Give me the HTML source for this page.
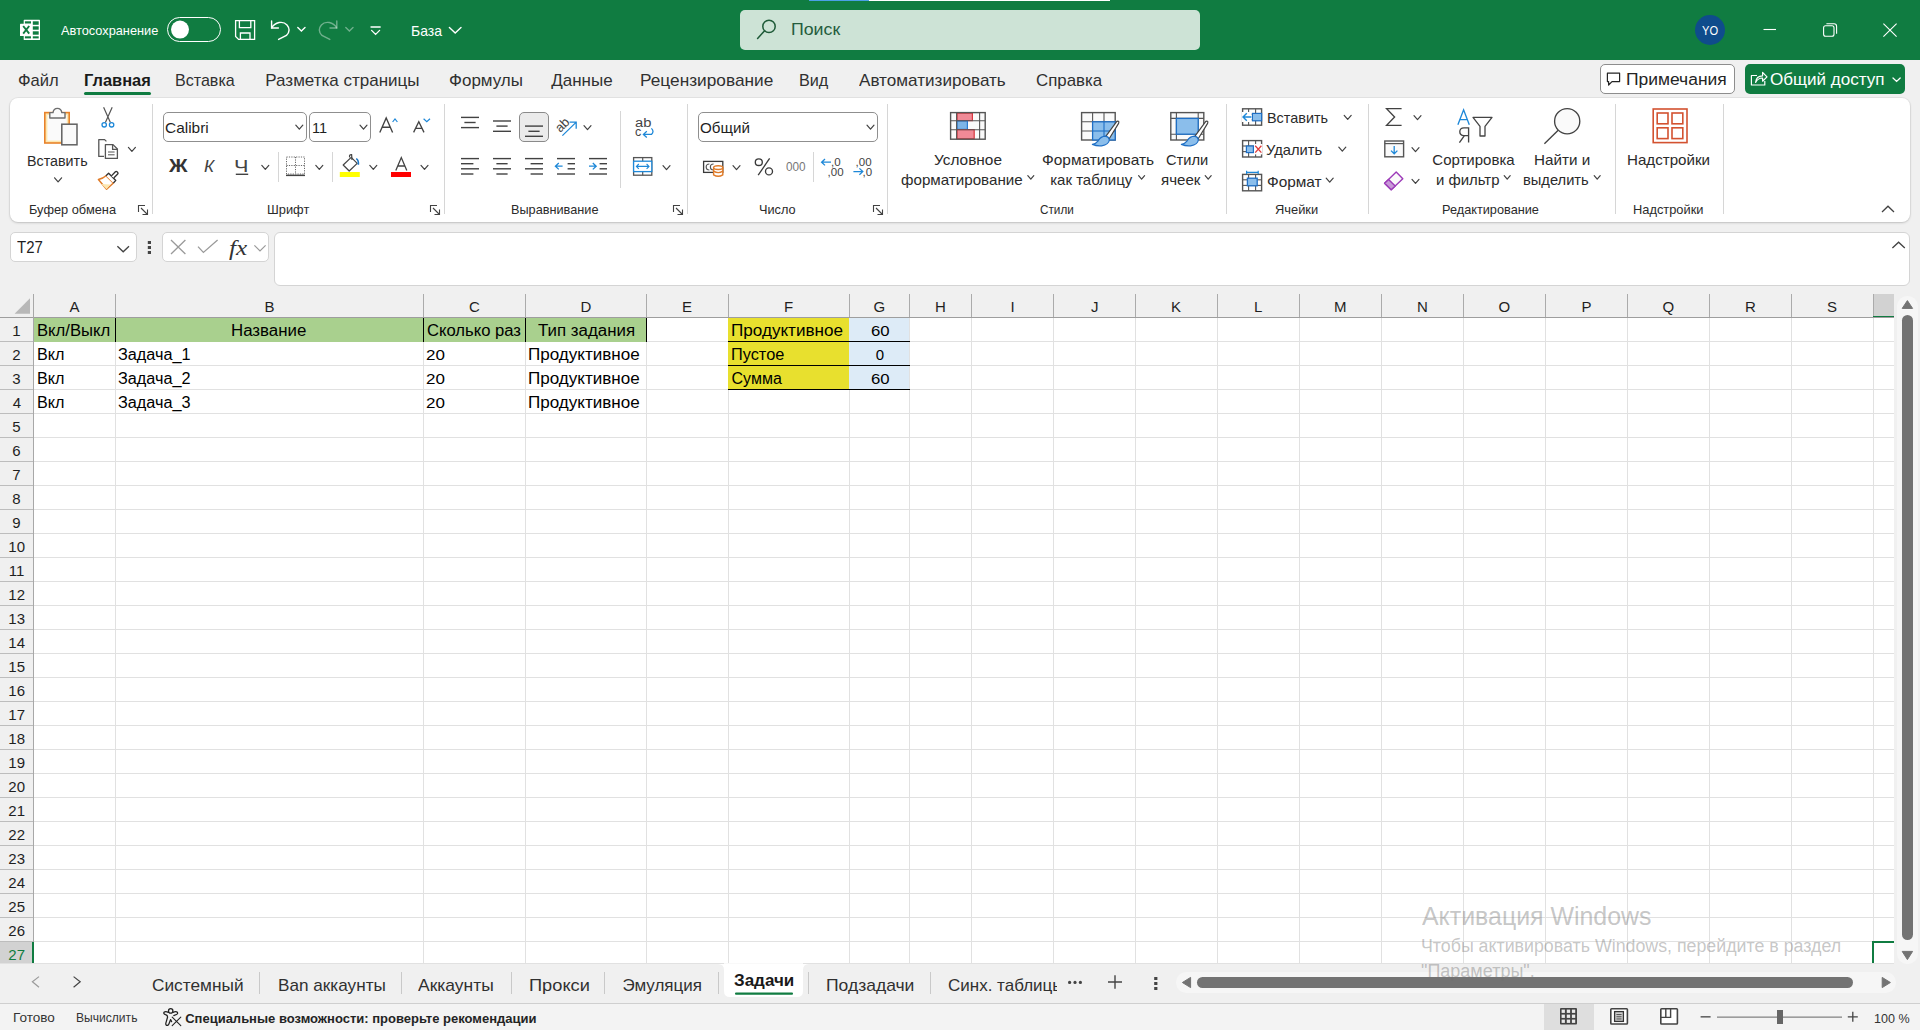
<!DOCTYPE html>
<html><head><meta charset="utf-8"><style>
*{box-sizing:border-box;}
html,body{margin:0;padding:0;}
body{width:1920px;height:1030px;overflow:hidden;position:relative;background:#f0f0f0;font-family:"Liberation Sans",sans-serif;color:#000;}
.t{position:absolute;line-height:0;white-space:pre;transform-origin:0 0;}
svg{position:absolute;left:0;top:0;}
</style></head><body>
<div style='position:absolute;left:0px;top:0px;width:1920px;height:60px;background:#107C41'></div><div style='position:absolute;left:809px;top:0px;width:60px;height:1px;background:#4aa0e6'></div><div style='position:absolute;left:869px;top:0px;width:241px;height:1px;background:#ffffff'></div><div style='position:absolute;left:740px;top:10px;width:460px;height:40px;background:#CDE3D6;border-radius:5px'></div><div style='position:absolute;left:84px;top:92px;width:67px;height:3px;background:#107C41;border-radius:2px'></div><div style='position:absolute;left:1600px;top:64px;width:135px;height:30px;background:#fff;border:1px solid #8d8d8d;border-radius:5px'></div><div style='position:absolute;left:1745px;top:64px;width:160px;height:30px;background:#107C41;border-radius:5px'></div><div style='position:absolute;left:10px;top:98px;width:1900px;height:124px;background:#fff;border-radius:8px;box-shadow:0 0 0 1px rgba(0,0,0,0.045),0 1px 2.5px rgba(0,0,0,0.16)'></div><div style='position:absolute;left:163px;top:112px;width:144px;height:30px;background:#fff;border:1px solid #8f8f8f;border-radius:5px'></div><div style='position:absolute;left:309px;top:112px;width:62px;height:30px;background:#fff;border:1px solid #8f8f8f;border-radius:5px'></div><div style='position:absolute;left:519px;top:112px;width:30px;height:30px;background:#ebebeb;border:1px solid #8a8a8a;border-radius:5px'></div><div style='position:absolute;left:698px;top:112px;width:180px;height:30px;background:#fff;border:1px solid #8f8f8f;border-radius:5px'></div><div style='position:absolute;left:10px;top:232px;width:127px;height:30px;background:#fff;border:1px solid #d4d4d4;border-radius:5px'></div><div style='position:absolute;left:162px;top:232px;width:107px;height:30px;background:#fff;border:1px solid #d4d4d4;border-radius:5px'></div><div style='position:absolute;left:274px;top:232px;width:1636px;height:54px;background:#fff;border:1px solid #d4d4d4;border-radius:6px'></div><div style='position:absolute;left:1897px;top:296px;width:21px;height:668px;background:#f6f6f6;border-radius:10px'></div><div style='position:absolute;left:1902px;top:315px;width:11px;height:625px;background:#737373;border-radius:5.5px'></div><div style='position:absolute;left:1176px;top:972px;width:720px;height:21px;background:#f6f6f6;border-radius:10.5px'></div><div style='position:absolute;left:1197px;top:977px;width:656px;height:11px;background:#737373;border-radius:5.5px'></div><div style='position:absolute;left:0px;top:1003px;width:1920px;height:1px;background:#cfcfcf'></div><div style='position:absolute;left:0px;top:1004px;width:1920px;height:26px;background:#f3f3f3'></div><div style='position:absolute;left:1544px;top:1004px;width:50px;height:26px;background:#dedede'></div>
<svg width="1920" height="1030" viewBox="0 0 1920 1030">
<rect x="23.7" y="19.8" width="16.3" height="20.2" rx="0.6" fill="#fff"/><rect x="20" y="23.7" width="11.3" height="12.3" rx="0.5" fill="#fff"/>
<g fill="#107C41"><rect x="24.9" y="21.3" width="6.1" height="2.2"/><rect x="24.9" y="36.3" width="6.1" height="2.1"/>
<rect x="32.8" y="21.3" width="5.9" height="3.5"/><rect x="32.8" y="26.3" width="5.9" height="3.4"/><rect x="32.8" y="31.3" width="5.9" height="3.4"/><rect x="32.8" y="36.3" width="5.9" height="2.1"/></g>
<path d="M23.2 26 L29.2 33.6 M29.2 26 L23.2 33.6" stroke="#107C41" stroke-width="1.9"/><rect x="167.5" y="17.5" width="53" height="24" rx="12" ry="12" fill="none" stroke="#fff" stroke-width="1"/>
<circle cx="180" cy="29.6" r="9" fill="#fff"/><g fill="none" stroke="#fff" stroke-width="1.3">
<path d="M235.6 20.6 H254.6 V39.4 H238.6 L235.6 36.4 Z"/>
<path d="M239.4 20.6 V27.6 H250.8 V20.6"/>
<path d="M240.4 39.4 V33 H250 V39.4"/></g><g fill="none" stroke="#fff" stroke-width="1.4" stroke-linecap="round">
<path d="M271.6 21 V28 H278.4"/>
<path d="M271.8 27.8 C275 22 283 20.5 287 25 C290 28.5 289.4 32.5 286.4 35.5 L278.6 39.4"/>
<path d="M297.8 27.6 L301.4 31 L305 27.6"/></g><g fill="none" stroke="#fff" stroke-opacity="0.4" stroke-width="1.4" stroke-linecap="round">
<path d="M336.8 21 V28 H330"/>
<path d="M336.6 27.8 C333.4 22 325.4 20.5 321.4 25 C318.4 28.5 319 32.5 322 35.5 L329.8 39.4"/>
<path d="M345.8 27.6 L349.4 31 L353 27.6"/></g><g fill="none" stroke="#fff" stroke-width="1.3" stroke-linecap="round">
<line x1="371" y1="27" x2="380.2" y2="27"/>
<path d="M371.6 30.4 L375.6 34.4 L379.6 30.4"/></g><path d="M449.4 27.4 L455.2 33 L461 27.4" fill="none" stroke="#fff" stroke-width="1.4" stroke-linecap="round"/><g fill="none" stroke="#1e5a38" stroke-width="1.5">
<circle cx="769" cy="26.4" r="6.2"/><line x1="764.6" y1="30.8" x2="757.6" y2="38.4" stroke-linecap="round"/></g><circle cx="1710" cy="30" r="15" fill="#0f4c8c"/><g stroke="#fff" stroke-width="1.1" fill="none">
<line x1="1763.5" y1="29.5" x2="1776" y2="29.5"/>
<rect x="1823.6" y="25.8" width="10.4" height="10.4" rx="2"/>
<path d="M1826.4 23.8 H1834 Q1836.6 23.8 1836.6 26.4 V33.8"/>
<path d="M1883.4 23.6 L1896.6 36.6 M1896.6 23.6 L1883.4 36.6"/></g><path d="M1607.4 73.2 H1619.6 V81.6 H1612 L1608.6 85 V81.6 H1607.4 Z" fill="none" stroke="#242424" stroke-width="1.2" stroke-linejoin="round"/><g fill="none" stroke="#fff" stroke-width="1.2" stroke-linejoin="round">
<path d="M1757 75.5 H1751.4 V85 H1764.8 V81"/>
<path d="M1755.6 82.4 C1756 77.6 1759 75.8 1762.6 75.8 V72.4 L1767 76.9 L1762.6 81.2 V78 C1759.6 78 1757.2 79.4 1755.6 82.4 Z"/></g>
<path d="M1893 78 L1896.6 81.4 L1900.2 78" fill="none" stroke="#fff" stroke-width="1.3" stroke-linecap="round"/><rect x="152" y="104" width="1" height="110" fill="#d6d6d6"/><rect x="444" y="104" width="1" height="110" fill="#d6d6d6"/><rect x="687" y="104" width="1" height="110" fill="#d6d6d6"/><rect x="887" y="104" width="1" height="110" fill="#d6d6d6"/><rect x="1226" y="104" width="1" height="110" fill="#d6d6d6"/><rect x="1368" y="104" width="1" height="110" fill="#d6d6d6"/><rect x="1615" y="104" width="1" height="110" fill="#d6d6d6"/><rect x="1723" y="104" width="1" height="110" fill="#d6d6d6"/><g fill="none" stroke="#424242" stroke-width="1.1"><path d="M138.5 212 V205.5 H145"/><path d="M141 208 L147.5 214.5 M142.5 214.5 H147.5 V209.5"/></g><g fill="none" stroke="#424242" stroke-width="1.1"><path d="M430.5 212 V205.5 H437"/><path d="M433 208 L439.5 214.5 M434.5 214.5 H439.5 V209.5"/></g><g fill="none" stroke="#424242" stroke-width="1.1"><path d="M673.5 212 V205.5 H680"/><path d="M676 208 L682.5 214.5 M677.5 214.5 H682.5 V209.5"/></g><g fill="none" stroke="#424242" stroke-width="1.1"><path d="M873.5 212 V205.5 H880"/><path d="M876 208 L882.5 214.5 M877.5 214.5 H882.5 V209.5"/></g><path d="M1882 212 L1888 206.2 L1894 212" fill="none" stroke="#424242" stroke-width="1.3"/><rect x="44.8" y="112.6" width="24.4" height="30.4" fill="#fde7b0" stroke="#e8822a" stroke-width="1.6"/>
<rect x="47.4" y="115" width="19.4" height="25.6" fill="#fafafa"/>
<path d="M49.8 112.6 H53 Q53.6 108.4 57.4 108.4 Q61.2 108.4 61.8 112.6 H65 V118 H49.8 Z" fill="#fafafa" stroke="#6e6e6e" stroke-width="1.4" stroke-linejoin="round"/>
<rect x="61.8" y="124.2" width="15.2" height="20.6" fill="#fafafa" stroke="#616161" stroke-width="1.5"/><path d="M54.6 177.8 L58.1 181.8 L61.6 177.8" fill="none" stroke="#424242" stroke-width="1.2" stroke-linecap="round" stroke-linejoin="round"/><g fill="none" stroke-width="1.2"><path d="M103.6 107.2 L110.4 122.6 M112.2 107.2 L105.4 122.6" stroke="#555"/>
<circle cx="104.2" cy="124.8" r="2.2" stroke="#1e88d8" stroke-width="1.3"/><circle cx="111.6" cy="124.8" r="2.2" stroke="#1e88d8" stroke-width="1.3"/></g><g fill="none" stroke="#555" stroke-width="1.3" stroke-linejoin="round">
<path d="M104 156.4 H98.8 V139.6 H104.6 L106.4 141.4"/>
<path d="M105.4 144.6 H113 L117.4 149 V158.4 H105.4 Z"/>
<path d="M112.6 144.6 V149.4 H117.4"/>
<line x1="108" y1="152" x2="114.6" y2="152" stroke-width="1"/><line x1="108" y1="154.8" x2="114.6" y2="154.8" stroke-width="1"/></g><path d="M128.4 147.4 L131.9 151.4 L135.4 147.4" fill="none" stroke="#424242" stroke-width="1.2" stroke-linecap="round" stroke-linejoin="round"/><path d="M98.4 179.6 Q103 178.6 106 175.8 L113.4 183 L106.6 189.2 Z" fill="#fff" stroke="#e07b28" stroke-width="1.5" stroke-linejoin="round"/>
<path d="M101.4 184 L110.2 184.4 L106.6 189.2 Z" fill="#fde7b0"/>
<path d="M106 175.8 L108.6 173.3 L115.8 180.4 L113.4 183" fill="#fff" stroke="#333" stroke-width="1.35" stroke-linejoin="round"/>
<path d="M111.4 175.9 L115.4 171.8 Q116.2 171 117 171.8 L117.7 172.5 Q118.4 173.3 117.7 174 L113.7 178" fill="#fff" stroke="#333" stroke-width="1.35" stroke-linejoin="round"/><path d="M295.8 125.2 L299.3 129.2 L302.8 125.2" fill="none" stroke="#424242" stroke-width="1.2" stroke-linecap="round" stroke-linejoin="round"/><path d="M360 125.2 L363.5 129.2 L367 125.2" fill="none" stroke="#424242" stroke-width="1.2" stroke-linecap="round" stroke-linejoin="round"/><path d="M379.8 132.4 L386.2 118 L392.6 132.4 M382.2 127.2 H390.2" fill="none" stroke="#424242" stroke-width="1.35"/>
<path d="M392.6 122 L395 119 L397.4 122" fill="none" stroke="#1e88d8" stroke-width="1.2"/>
<path d="M413.6 132.4 L418.8 121.8 L424 132.4 M415.6 128.4 H422" fill="none" stroke="#424242" stroke-width="1.3"/>
<path d="M423.6 118.8 L426.8 121.8 L430 118.8" fill="none" stroke="#1e88d8" stroke-width="1.2"/><rect x="235.8" y="173.6" width="12.4" height="1.4" fill="#424242"/><path d="M261.8 165.4 L265.3 169.4 L268.8 165.4" fill="none" stroke="#424242" stroke-width="1.2" stroke-linecap="round" stroke-linejoin="round"/><rect x="278" y="152" width="1" height="30" fill="#d6d6d6"/><rect x="332" y="152" width="1" height="30" fill="#d6d6d6"/><g fill="none" stroke="#6a6a6a" stroke-width="1" stroke-dasharray="1.2 1.2">
<rect x="286.5" y="157" width="18" height="17"/><line x1="295.5" y1="157" x2="295.5" y2="174"/><line x1="286.5" y1="165.5" x2="304.5" y2="165.5"/></g>
<rect x="286" y="174.6" width="19" height="1.5" fill="#424242"/><path d="M315.8 165.4 L319.3 169.4 L322.8 165.4" fill="none" stroke="#424242" stroke-width="1.2" stroke-linecap="round" stroke-linejoin="round"/><path d="M343.2 165 L351.2 157.4 L357.2 163.4 L349.2 171 Z" fill="#fff" stroke="#444" stroke-width="1.25" stroke-linejoin="round"/>
<path d="M349.6 157.4 Q349 154.4 351.6 154.6 L352 160" fill="none" stroke="#444" stroke-width="1.2"/>
<path d="M356.2 158.6 Q358.8 160 358.4 164.8" fill="none" stroke="#1e78c8" stroke-width="1.6"/>
<rect x="339.8" y="172" width="20" height="5" fill="#ffff00"/><path d="M369.8 165.4 L373.3 169.4 L376.8 165.4" fill="none" stroke="#424242" stroke-width="1.2" stroke-linecap="round" stroke-linejoin="round"/><path d="M395.8 170.6 L401.3 157.6 L406.8 170.6 M397.8 166 H404.8" fill="none" stroke="#424242" stroke-width="1.3"/>
<rect x="391" y="172" width="20" height="5" fill="#ff0000"/><path d="M421 165.4 L424.5 169.4 L428 165.4" fill="none" stroke="#424242" stroke-width="1.2" stroke-linecap="round" stroke-linejoin="round"/><rect x="461" y="116.7" width="18" height="1.4" fill="#424242"/><rect x="464.4" y="121.8" width="11.2" height="1.4" fill="#424242"/><rect x="461" y="126.89999999999999" width="18" height="1.4" fill="#424242"/><rect x="493" y="120.3" width="18" height="1.4" fill="#424242"/><rect x="496.4" y="125.39999999999999" width="11.2" height="1.4" fill="#424242"/><rect x="493" y="130.60000000000002" width="18" height="1.4" fill="#424242"/><rect x="525" y="125.39999999999999" width="18" height="1.4" fill="#424242"/><rect x="528.4" y="130.60000000000002" width="11.2" height="1.4" fill="#424242"/><rect x="525" y="135.60000000000002" width="18" height="1.4" fill="#424242"/><g transform="translate(562.4 124.6) rotate(-45)"><text x="-7.6" y="4.4" font-family="Liberation Sans" font-size="13" fill="#444">ab</text></g>
<path d="M562.4 135.6 L576 122.4 M569.6 122.2 H576.2 V128.8" fill="none" stroke="#1e88d8" stroke-width="1.3"/><path d="M584 125.6 L587.5 129.6 L591 125.6" fill="none" stroke="#424242" stroke-width="1.2" stroke-linecap="round" stroke-linejoin="round"/><rect x="461" y="157.9" width="18" height="1.4" fill="#424242"/><rect x="461" y="163.0" width="12.4" height="1.4" fill="#424242"/><rect x="461" y="168.10000000000002" width="18" height="1.4" fill="#424242"/><rect x="461" y="173.3" width="12.4" height="1.4" fill="#424242"/><rect x="493" y="157.9" width="18" height="1.4" fill="#424242"/><rect x="496.4" y="163.0" width="11.2" height="1.4" fill="#424242"/><rect x="493" y="168.10000000000002" width="18" height="1.4" fill="#424242"/><rect x="496.4" y="173.3" width="11.2" height="1.4" fill="#424242"/><rect x="525" y="157.9" width="18" height="1.4" fill="#424242"/><rect x="530.6" y="163.0" width="12.4" height="1.4" fill="#424242"/><rect x="525" y="168.10000000000002" width="18" height="1.4" fill="#424242"/><rect x="530.6" y="173.3" width="12.4" height="1.4" fill="#424242"/><rect x="557" y="157.9" width="18" height="1.4" fill="#424242"/><rect x="557" y="173.3" width="18" height="1.4" fill="#424242"/><rect x="567.6" y="163.0" width="7.4" height="1.4" fill="#424242"/><rect x="567.6" y="168.10000000000002" width="7.4" height="1.4" fill="#424242"/><path d="M562.6 166.2 H555.6 M558.8 163 L555.4 166.2 L558.8 169.4" fill="none" stroke="#1e88d8" stroke-width="1.3"/><rect x="589" y="157.9" width="18" height="1.4" fill="#424242"/><rect x="589" y="173.3" width="18" height="1.4" fill="#424242"/><rect x="599.6" y="163.0" width="7.4" height="1.4" fill="#424242"/><rect x="599.6" y="168.10000000000002" width="7.4" height="1.4" fill="#424242"/><path d="M589 166.2 H596 M592.8 163 L596.2 166.2 L592.8 169.4" fill="none" stroke="#1e88d8" stroke-width="1.3"/><rect x="620" y="111" width="1" height="77" fill="#d6d6d6"/><text x="635" y="127.2" font-family="Liberation Sans" font-size="12.5" fill="#444" textLength="16.4" lengthAdjust="spacingAndGlyphs">ab</text>
<text x="635" y="136" font-family="Liberation Sans" font-size="12.5" fill="#444">c</text>
<path d="M651.4 128.4 Q654.6 131.6 651.4 134.4 H643.6 M646.8 131.2 L643.4 134.4 L646.8 137.4" fill="none" stroke="#1e88d8" stroke-width="1.3"/><rect x="633.6" y="157.6" width="18.2" height="17.6" fill="#fff" stroke="#555" stroke-width="1.3"/>
<line x1="642.7" y1="157.6" x2="642.7" y2="175.2" stroke="#555" stroke-width="1.2"/>
<rect x="633.6" y="161.2" width="18.2" height="10.4" fill="#fff" stroke="#1e88d8" stroke-width="1.3"/>
<path d="M636.4 166.4 H649 M638.8 164 L636.4 166.4 L638.8 168.8 M646.6 164 L649 166.4 L646.6 168.8" fill="none" stroke="#1e88d8" stroke-width="1.1"/><path d="M663 165.6 L666.5 169.6 L670 165.6" fill="none" stroke="#424242" stroke-width="1.2" stroke-linecap="round" stroke-linejoin="round"/><path d="M867 125.2 L870.5 129.2 L874 125.2" fill="none" stroke="#424242" stroke-width="1.2" stroke-linecap="round" stroke-linejoin="round"/><rect x="703.6" y="161.4" width="19.2" height="11" fill="#fff" stroke="#3a3a3a" stroke-width="1.3"/>
<path d="M709.4 164 Q706.2 164 706.2 167 Q706.2 170 709.4 170 M713.6 164 Q710.4 164 710.4 167 Q710.4 170 713.6 170" fill="none" stroke="#555" stroke-width="1.2"/>
<g fill="#fff" stroke="#e07b28" stroke-width="1.4"><path d="M713.6 167.6 V174.8 Q718.2 177.8 722.8 174.8 V167.6"/><ellipse cx="718.2" cy="167.6" rx="4.6" ry="1.9"/><path d="M713.6 171.2 Q718.2 174 722.8 171.2" fill="none"/></g><path d="M733 165.6 L736.5 169.6 L740 165.6" fill="none" stroke="#424242" stroke-width="1.2" stroke-linecap="round" stroke-linejoin="round"/><g fill="none" stroke="#3a3a3a" stroke-width="1.35"><ellipse cx="758.8" cy="162.2" rx="3.5" ry="3.3"/><ellipse cx="769" cy="171.4" rx="3.5" ry="3.5"/><line x1="769.6" y1="158.4" x2="758.2" y2="175.2"/></g><rect x="813" y="152" width="1" height="30" fill="#d6d6d6"/><text x="831" y="166.4" font-family="Liberation Sans" font-size="11.5" fill="#444">,0</text>
<text x="827.6" y="175.8" font-family="Liberation Sans" font-size="11.5" fill="#444">,00</text>
<path d="M831 162.2 H821.8 M825 159 L821.6 162.2 L825 165.4" fill="none" stroke="#1e88d8" stroke-width="1.3"/>
<text x="855.6" y="166.4" font-family="Liberation Sans" font-size="11.5" fill="#444">,00</text>
<text x="862.6" y="175.8" font-family="Liberation Sans" font-size="11.5" fill="#444">,0</text>
<path d="M853.4 171.6 H862.6 M859.4 168.4 L862.8 171.6 L859.4 174.8" fill="none" stroke="#1e88d8" stroke-width="1.3"/><rect x="950.6" y="112.6" width="34.6" height="26.6" fill="#fafafa"/><rect x="957" y="113.2" width="15.4" height="7.4" fill="#f08a96" stroke="#d9363e" stroke-width="1.2"/><rect x="957" y="121" width="10.4" height="8.4" fill="#7db4e6" stroke="#2a7ad0" stroke-width="1.2"/><rect x="957" y="129.6" width="17.2" height="9.2" fill="#f08a96" stroke="#d9363e" stroke-width="1.2"/><rect x="950.6" y="112.6" width="34.6" height="26.6" fill="none" stroke="#555" stroke-width="1.4"/><line x1="956.6" y1="112.6" x2="956.6" y2="139.2" stroke="#555" stroke-width="1.1"/><line x1="979.6" y1="112.6" x2="979.6" y2="139.2" stroke="#555" stroke-width="1.1"/><line x1="950.6" y1="120.8" x2="985.2" y2="120.8" stroke="#555" stroke-width="1.1"/><line x1="950.6" y1="129.8" x2="985.2" y2="129.8" stroke="#555" stroke-width="1.1"/><path d="M1027.8 175.6 L1030.8 179.2 L1033.8 175.6" fill="none" stroke="#424242" stroke-width="1.2" stroke-linecap="round" stroke-linejoin="round"/><rect x="1081.6" y="112.6" width="33.6" height="27.4" fill="#fafafa"/><rect x="1081.6" y="112.6" width="33.6" height="27.4" fill="none" stroke="#555" stroke-width="1.4"/><line x1="1092.6" y1="112.6" x2="1092.6" y2="140.0" stroke="#555" stroke-width="1.1"/><line x1="1104" y1="112.6" x2="1104" y2="140.0" stroke="#555" stroke-width="1.1"/><line x1="1081.6" y1="121.8" x2="1115.1999999999998" y2="121.8" stroke="#555" stroke-width="1.1"/><line x1="1081.6" y1="131" x2="1115.1999999999998" y2="131" stroke="#555" stroke-width="1.1"/><rect x="1092.6" y="121.8" width="22.6" height="18.2" fill="#8bbeeb" stroke="#1f6fc5" stroke-width="1.3"/><line x1="1104" y1="121.8" x2="1104" y2="140" stroke="#1f6fc5" stroke-width="1.1"/><line x1="1092.6" y1="131" x2="1115.2" y2="131" stroke="#1f6fc5" stroke-width="1.1"/><path d="M1116.8 121.4 Q1119.6 120.4 1118.6 123.4 L1109.2 138.8 L1105.6 136.6 Z" fill="#fff" stroke="#444" stroke-width="1.2" stroke-linejoin="round"/><path d="M1105.4 136.2 Q1108.8 136.6 1109.4 139.8 Q1108.8 144.8 1101.6 145.8 Q1096.6 146.2 1092.4 144.4 Q1096.2 143.4 1098.2 140.8 Q1100.8 136.4 1105.4 136.2 Z" fill="#8bbeeb" stroke="#1f6fc5" stroke-width="1.2" stroke-linejoin="round"/><path d="M1138.6 175.6 L1141.6 179.2 L1144.6 175.6" fill="none" stroke="#424242" stroke-width="1.2" stroke-linecap="round" stroke-linejoin="round"/><rect x="1170.8" y="112.6" width="33" height="27.4" fill="#fafafa"/><rect x="1170.8" y="112.6" width="33" height="27.4" fill="none" stroke="#555" stroke-width="1.4"/><line x1="1176.4" y1="112.6" x2="1176.4" y2="140.0" stroke="#555" stroke-width="1.1"/><line x1="1198.2" y1="112.6" x2="1198.2" y2="140.0" stroke="#555" stroke-width="1.1"/><line x1="1170.8" y1="118.4" x2="1203.8" y2="118.4" stroke="#555" stroke-width="1.1"/><line x1="1170.8" y1="134.2" x2="1203.8" y2="134.2" stroke="#555" stroke-width="1.1"/><rect x="1176.4" y="118.4" width="21.8" height="15.8" fill="#8bbeeb" stroke="#1f6fc5" stroke-width="1.3"/><path d="M1205.8 121.4 Q1208.6 120.4 1207.6 123.4 L1198.2 138.8 L1194.6 136.6 Z" fill="#fff" stroke="#444" stroke-width="1.2" stroke-linejoin="round"/><path d="M1194.4 136.2 Q1197.8 136.6 1198.4 139.8 Q1197.8 144.8 1190.6 145.8 Q1185.6 146.2 1181.4 144.4 Q1185.2 143.4 1187.2 140.8 Q1189.8 136.4 1194.4 136.2 Z" fill="#8bbeeb" stroke="#1f6fc5" stroke-width="1.2" stroke-linejoin="round"/><path d="M1205.2 175.6 L1208.2 179.2 L1211.2 175.6" fill="none" stroke="#424242" stroke-width="1.2" stroke-linecap="round" stroke-linejoin="round"/><rect x="1242.6" y="108.8" width="19" height="16.4" fill="none" stroke="#555" stroke-width="1.4"/><line x1="1248.6" y1="108.8" x2="1248.6" y2="125.19999999999999" stroke="#555" stroke-width="1.1"/><line x1="1255.6" y1="108.8" x2="1255.6" y2="125.19999999999999" stroke="#555" stroke-width="1.1"/><line x1="1242.6" y1="114.2" x2="1261.6" y2="114.2" stroke="#555" stroke-width="1.1"/><line x1="1242.6" y1="119.8" x2="1261.6" y2="119.8" stroke="#555" stroke-width="1.1"/><rect x="1252.4" y="113.4" width="9.2" height="7.4" fill="#8bbeeb" stroke="#1f6fc5" stroke-width="1.2"/><rect x="1242" y="112" width="9.6" height="10" fill="#fff"/><path d="M1251.4 117 H1243.2 M1246.8 113.2 L1243 117 L1246.8 120.8" fill="none" stroke="#1e88d8" stroke-width="1.4"/><path d="M1344.2 115.4 L1347.7 119.4 L1351.2 115.4" fill="none" stroke="#424242" stroke-width="1.2" stroke-linecap="round" stroke-linejoin="round"/><rect x="1242.6" y="140.6" width="19" height="16.4" fill="none" stroke="#555" stroke-width="1.4"/><line x1="1248.6" y1="140.6" x2="1248.6" y2="157.0" stroke="#555" stroke-width="1.1"/><line x1="1255.6" y1="140.6" x2="1255.6" y2="157.0" stroke="#555" stroke-width="1.1"/><line x1="1242.6" y1="146.0" x2="1261.6" y2="146.0" stroke="#555" stroke-width="1.1"/><line x1="1242.6" y1="151.6" x2="1261.6" y2="151.6" stroke="#555" stroke-width="1.1"/><rect x="1246.4" y="146" width="7" height="6.6" fill="#8bbeeb" stroke="#1f6fc5" stroke-width="1.2"/><rect x="1254" y="144" width="8.4" height="10.4" fill="#fff"/><path d="M1255.2 145.8 L1261.4 152.6 M1261.4 145.8 L1255.2 152.6" stroke="#e03c3c" stroke-width="1.3"/><path d="M1338.8 147.2 L1342.3 151.2 L1345.8 147.2" fill="none" stroke="#424242" stroke-width="1.2" stroke-linecap="round" stroke-linejoin="round"/><rect x="1242.6" y="174.4" width="19" height="16.4" fill="none" stroke="#555" stroke-width="1.4"/><line x1="1248.6" y1="174.4" x2="1248.6" y2="190.8" stroke="#555" stroke-width="1.1"/><line x1="1255.6" y1="174.4" x2="1255.6" y2="190.8" stroke="#555" stroke-width="1.1"/><line x1="1242.6" y1="179.8" x2="1261.6" y2="179.8" stroke="#555" stroke-width="1.1"/><line x1="1242.6" y1="185.4" x2="1261.6" y2="185.4" stroke="#555" stroke-width="1.1"/><rect x="1247.4" y="178.2" width="9.8" height="7.6" fill="#8bbeeb" stroke="#1f6fc5" stroke-width="1.3"/><path d="M1246.6 170.8 V174 M1258.2 170.8 V174 M1246.6 172.4 H1258.2" stroke="#1e88d8" stroke-width="1.2"/><path d="M1326.2 178.2 L1329.7 182.2 L1333.2 178.2" fill="none" stroke="#424242" stroke-width="1.2" stroke-linecap="round" stroke-linejoin="round"/><path d="M1401.6 108.6 H1386.6 L1394.6 117 L1386.6 125.4 H1401.6" fill="none" stroke="#424242" stroke-width="1.35" stroke-linejoin="miter"/><path d="M1414 115.6 L1417.5 119.6 L1421 115.6" fill="none" stroke="#424242" stroke-width="1.2" stroke-linecap="round" stroke-linejoin="round"/><rect x="1384.8" y="141" width="18.8" height="15.8" fill="#fafafa" stroke="#555" stroke-width="1.4"/><line x1="1384.8" y1="143.6" x2="1403.6" y2="143.6" stroke="#555" stroke-width="1.2"/><path d="M1394.2 146 V153.6 M1391 150.6 L1394.2 153.8 L1397.4 150.6" fill="none" stroke="#1e88d8" stroke-width="1.3"/><path d="M1412 147.6 L1415.5 151.6 L1419 147.6" fill="none" stroke="#424242" stroke-width="1.2" stroke-linecap="round" stroke-linejoin="round"/><path d="M1396.2 172 L1402.8 178.8 L1391.2 189.8 L1384.6 183.2 Z" fill="#fafafa" stroke="#9c3bb8" stroke-width="1.4" stroke-linejoin="round"/><path d="M1384.6 183.2 L1388.6 179.4 L1395.2 186.1 L1391.2 189.8 Z" fill="#c89ad8" stroke="#9c3bb8" stroke-width="1.4" stroke-linejoin="round"/><path d="M1412 179.4 L1415.5 183.4 L1419 179.4" fill="none" stroke="#424242" stroke-width="1.2" stroke-linecap="round" stroke-linejoin="round"/><path d="M1457.9 124.8 L1463.6 109.8 L1469.3 124.8 M1459.8 119.6 H1467.4" fill="none" stroke="#1e88d8" stroke-width="1.35"/>
<path d="M1468.6 142.6 V127.8 H1464 Q1459.8 127.8 1459.8 131.8 Q1459.8 135.6 1464 135.6 H1468.6 M1464.4 135.6 L1459.4 142.6" fill="none" stroke="#444" stroke-width="1.35"/>
<path d="M1473 117.4 H1492 L1485 126.4 V136 H1480 V126.4 Z" fill="none" stroke="#444" stroke-width="1.3" stroke-linejoin="round"/><path d="M1504.2 175.6 L1507.2 179.2 L1510.2 175.6" fill="none" stroke="#424242" stroke-width="1.2" stroke-linecap="round" stroke-linejoin="round"/><circle cx="1567.2" cy="121.2" r="12.6" fill="#fafafa" stroke="#424242" stroke-width="1.35"/><line x1="1558.2" y1="130.2" x2="1544.4" y2="143.8" stroke="#424242" stroke-width="1.35"/><path d="M1594.2 175.6 L1597.2 179.2 L1600.2 175.6" fill="none" stroke="#424242" stroke-width="1.2" stroke-linecap="round" stroke-linejoin="round"/><g fill="none" stroke="#d35230" stroke-width="1.6"><rect x="1653.2" y="109" width="33.8" height="33.6"/><rect x="1657.2" y="113" width="10.8" height="10.8"/><rect x="1672" y="113" width="10.8" height="10.8"/><rect x="1657.2" y="127.8" width="10.8" height="10.8"/><rect x="1672" y="127.8" width="10.8" height="10.8"/></g><path d="M117.4 246.2 L123.2 251.8 L129 246.2" fill="none" stroke="#424242" stroke-width="1.3"/><rect x="147.8" y="241" width="3.2" height="3" fill="#444"/><rect x="147.8" y="246" width="3.2" height="3" fill="#444"/><rect x="147.8" y="251" width="3.2" height="3" fill="#444"/><path d="M171 240 L185.4 254 M185.4 240 L171 254" stroke="#9a9a9a" stroke-width="1.3" fill="none"/><path d="M198 246.6 L203.4 252.4 L217.6 240" stroke="#9a9a9a" stroke-width="1.3" fill="none"/><path d="M254.4 245.4 L260 251 L265.6 245.4" fill="none" stroke="#9a9a9a" stroke-width="1.2"/><path d="M1892.4 248 L1898.6 242.2 L1904.8 248" fill="none" stroke="#424242" stroke-width="1.3"/><rect x="34" y="318" width="1860" height="645" fill="#ffffff"/><rect x="115" y="294" width="1" height="23" fill="#ababab"/><rect x="423" y="294" width="1" height="23" fill="#ababab"/><rect x="525" y="294" width="1" height="23" fill="#ababab"/><rect x="646" y="294" width="1" height="23" fill="#ababab"/><rect x="728" y="294" width="1" height="23" fill="#ababab"/><rect x="849" y="294" width="1" height="23" fill="#ababab"/><rect x="909" y="294" width="1" height="23" fill="#ababab"/><rect x="971" y="294" width="1" height="23" fill="#ababab"/><rect x="1053" y="294" width="1" height="23" fill="#ababab"/><rect x="1135" y="294" width="1" height="23" fill="#ababab"/><rect x="1217" y="294" width="1" height="23" fill="#ababab"/><rect x="1299" y="294" width="1" height="23" fill="#ababab"/><rect x="1381" y="294" width="1" height="23" fill="#ababab"/><rect x="1463" y="294" width="1" height="23" fill="#ababab"/><rect x="1545" y="294" width="1" height="23" fill="#ababab"/><rect x="1627" y="294" width="1" height="23" fill="#ababab"/><rect x="1709" y="294" width="1" height="23" fill="#ababab"/><rect x="1791" y="294" width="1" height="23" fill="#ababab"/><rect x="1873" y="294" width="1" height="23" fill="#ababab"/><rect x="1874" y="294" width="20" height="23" fill="#d2d2d2"/><rect x="1873" y="316" width="21" height="2" fill="#107C41"/><rect x="115" y="318" width="1" height="645" fill="#e1e1e1"/><rect x="423" y="318" width="1" height="645" fill="#e1e1e1"/><rect x="525" y="318" width="1" height="645" fill="#e1e1e1"/><rect x="646" y="318" width="1" height="645" fill="#e1e1e1"/><rect x="728" y="318" width="1" height="645" fill="#e1e1e1"/><rect x="849" y="318" width="1" height="645" fill="#e1e1e1"/><rect x="909" y="318" width="1" height="645" fill="#e1e1e1"/><rect x="971" y="318" width="1" height="645" fill="#e1e1e1"/><rect x="1053" y="318" width="1" height="645" fill="#e1e1e1"/><rect x="1135" y="318" width="1" height="645" fill="#e1e1e1"/><rect x="1217" y="318" width="1" height="645" fill="#e1e1e1"/><rect x="1299" y="318" width="1" height="645" fill="#e1e1e1"/><rect x="1381" y="318" width="1" height="645" fill="#e1e1e1"/><rect x="1463" y="318" width="1" height="645" fill="#e1e1e1"/><rect x="1545" y="318" width="1" height="645" fill="#e1e1e1"/><rect x="1627" y="318" width="1" height="645" fill="#e1e1e1"/><rect x="1709" y="318" width="1" height="645" fill="#e1e1e1"/><rect x="1791" y="318" width="1" height="645" fill="#e1e1e1"/><rect x="1873" y="318" width="1" height="645" fill="#e1e1e1"/><rect x="34" y="341" width="1860" height="1" fill="#e1e1e1"/><rect x="34" y="365" width="1860" height="1" fill="#e1e1e1"/><rect x="34" y="389" width="1860" height="1" fill="#e1e1e1"/><rect x="34" y="413" width="1860" height="1" fill="#e1e1e1"/><rect x="34" y="437" width="1860" height="1" fill="#e1e1e1"/><rect x="34" y="461" width="1860" height="1" fill="#e1e1e1"/><rect x="34" y="485" width="1860" height="1" fill="#e1e1e1"/><rect x="34" y="509" width="1860" height="1" fill="#e1e1e1"/><rect x="34" y="533" width="1860" height="1" fill="#e1e1e1"/><rect x="34" y="557" width="1860" height="1" fill="#e1e1e1"/><rect x="34" y="581" width="1860" height="1" fill="#e1e1e1"/><rect x="34" y="605" width="1860" height="1" fill="#e1e1e1"/><rect x="34" y="629" width="1860" height="1" fill="#e1e1e1"/><rect x="34" y="653" width="1860" height="1" fill="#e1e1e1"/><rect x="34" y="677" width="1860" height="1" fill="#e1e1e1"/><rect x="34" y="701" width="1860" height="1" fill="#e1e1e1"/><rect x="34" y="725" width="1860" height="1" fill="#e1e1e1"/><rect x="34" y="749" width="1860" height="1" fill="#e1e1e1"/><rect x="34" y="773" width="1860" height="1" fill="#e1e1e1"/><rect x="34" y="797" width="1860" height="1" fill="#e1e1e1"/><rect x="34" y="821" width="1860" height="1" fill="#e1e1e1"/><rect x="34" y="845" width="1860" height="1" fill="#e1e1e1"/><rect x="34" y="869" width="1860" height="1" fill="#e1e1e1"/><rect x="34" y="893" width="1860" height="1" fill="#e1e1e1"/><rect x="34" y="917" width="1860" height="1" fill="#e1e1e1"/><rect x="34" y="941" width="1860" height="1" fill="#e1e1e1"/><rect x="0" y="341" width="33" height="1" fill="#bdbdbd"/><rect x="0" y="365" width="33" height="1" fill="#bdbdbd"/><rect x="0" y="389" width="33" height="1" fill="#bdbdbd"/><rect x="0" y="413" width="33" height="1" fill="#bdbdbd"/><rect x="0" y="437" width="33" height="1" fill="#bdbdbd"/><rect x="0" y="461" width="33" height="1" fill="#bdbdbd"/><rect x="0" y="485" width="33" height="1" fill="#bdbdbd"/><rect x="0" y="509" width="33" height="1" fill="#bdbdbd"/><rect x="0" y="533" width="33" height="1" fill="#bdbdbd"/><rect x="0" y="557" width="33" height="1" fill="#bdbdbd"/><rect x="0" y="581" width="33" height="1" fill="#bdbdbd"/><rect x="0" y="605" width="33" height="1" fill="#bdbdbd"/><rect x="0" y="629" width="33" height="1" fill="#bdbdbd"/><rect x="0" y="653" width="33" height="1" fill="#bdbdbd"/><rect x="0" y="677" width="33" height="1" fill="#bdbdbd"/><rect x="0" y="701" width="33" height="1" fill="#bdbdbd"/><rect x="0" y="725" width="33" height="1" fill="#bdbdbd"/><rect x="0" y="749" width="33" height="1" fill="#bdbdbd"/><rect x="0" y="773" width="33" height="1" fill="#bdbdbd"/><rect x="0" y="797" width="33" height="1" fill="#bdbdbd"/><rect x="0" y="821" width="33" height="1" fill="#bdbdbd"/><rect x="0" y="845" width="33" height="1" fill="#bdbdbd"/><rect x="0" y="869" width="33" height="1" fill="#bdbdbd"/><rect x="0" y="893" width="33" height="1" fill="#bdbdbd"/><rect x="0" y="917" width="33" height="1" fill="#bdbdbd"/><rect x="0" y="941" width="33" height="1" fill="#bdbdbd"/><rect x="0" y="942" width="32" height="21" fill="#d2d2d2"/><rect x="0" y="317" width="1894" height="1" fill="#9e9e9e"/><rect x="33" y="294" width="1" height="669" fill="#a8a8a8"/><rect x="32" y="942" width="2" height="21" fill="#107C41"/><path d="M30 298.2 V313.8 H14.6 Z" fill="#b8b8b8"/><rect x="34" y="318" width="612" height="24" fill="#A9D08E"/><rect x="728" y="318" width="121" height="72" fill="#E8E02E"/><rect x="849" y="318" width="60" height="72" fill="#DDEBF7"/><rect x="115" y="318" width="1" height="24" fill="#000"/><rect x="423" y="318" width="1" height="24" fill="#000"/><rect x="525" y="318" width="1" height="24" fill="#000"/><rect x="646" y="318" width="1" height="24" fill="#000"/><rect x="728" y="341" width="182" height="1" fill="#000"/><rect x="728" y="365" width="182" height="1" fill="#000"/><rect x="728" y="389" width="182" height="1" fill="#000"/><rect x="1872" y="941" width="22" height="2" fill="#107C41"/><rect x="1872" y="941" width="2" height="22" fill="#107C41"/><path d="M1907.4 300.6 L1912.6 308.4 H1902.2 Z" fill="#737373" stroke="#737373" stroke-width="1" stroke-linejoin="round"/><path d="M1907.4 959.6 L1912.6 951.4 H1902.2 Z" fill="#737373" stroke="#737373" stroke-width="1" stroke-linejoin="round"/><rect x="0" y="963" width="1894" height="1" fill="#e1e1e1"/><path d="M39 976.6 L32.4 981.8 L39 987.2" fill="none" stroke="#9a9a9a" stroke-width="1.2"/><path d="M73.6 976.6 L80.2 981.8 L73.6 987.2" fill="none" stroke="#444" stroke-width="1.2"/><path d="M718 964 Q724 964 724 970 V991 Q724 997 730 997 H797 Q803 997 803 991 V970 Q803 964 809 964 Z" fill="#ffffff"/><rect x="724" y="963.2" width="79" height="6" fill="#ffffff"/><rect x="259" y="972" width="1" height="22" fill="#c9c9c9"/><rect x="401" y="972" width="1" height="22" fill="#c9c9c9"/><rect x="511" y="972" width="1" height="22" fill="#c9c9c9"/><rect x="604" y="972" width="1" height="22" fill="#c9c9c9"/><rect x="718" y="972" width="1" height="22" fill="#c9c9c9"/><rect x="808" y="972" width="1" height="22" fill="#c9c9c9"/><rect x="930" y="972" width="1" height="22" fill="#c9c9c9"/><rect x="735" y="992.6" width="58" height="2.2" rx="1" fill="#107C41"/><circle cx="1069.6" cy="982.4" r="1.6" fill="#444"/><circle cx="1075" cy="982.4" r="1.6" fill="#444"/><circle cx="1080.4" cy="982.4" r="1.6" fill="#444"/><path d="M1108 982 H1122 M1115 975.2 V988.8" stroke="#444" stroke-width="1.4"/><rect x="1154.2" y="977" width="3.2" height="3" fill="#444"/><rect x="1154.2" y="982" width="3.2" height="3" fill="#444"/><rect x="1154.2" y="987" width="3.2" height="3" fill="#444"/><path d="M1182.4 982.5 L1190.6 977.4 V987.6 Z" fill="#737373" stroke="#737373" stroke-width="1" stroke-linejoin="round"/><path d="M1890.4 982.5 L1882.2 977.4 V987.6 Z" fill="#737373" stroke="#737373" stroke-width="1" stroke-linejoin="round"/><g fill="none" stroke="#222" stroke-width="1.25" stroke-linecap="round" stroke-linejoin="round">
<circle cx="170.7" cy="1010.9" r="2.2"/>
<path d="M168.4 1012.4 Q165.6 1010.8 164 1012.2 Q163.2 1013.8 165.6 1014.6 Q167.6 1015.2 167.6 1017 L165.8 1023.4 Q165.6 1025.6 167.6 1025.4 Q168.6 1025 169.2 1023.2 L170.6 1019.6 L171.6 1021.6"/>
<path d="M173 1012.4 Q175.8 1010.8 177.4 1012.2 Q178.4 1014 175.6 1014.8 L173.8 1015.6"/>
<path d="M172.2 1017.2 L180.8 1025.6 M180.8 1017.2 L172.2 1025.6" stroke-width="1.1"/></g><rect x="1560" y="1008" width="17" height="16.6" rx="1" fill="#444"/>
<g fill="#e8e8e8"><rect x="1561.6" y="1009.6" width="3.3" height="3.3"/><rect x="1566.8" y="1009.6" width="3.3" height="3.3"/><rect x="1571.9" y="1009.6" width="3.3" height="3.3"/>
<rect x="1561.6" y="1014.6" width="3.3" height="3.3"/><rect x="1566.8" y="1014.6" width="3.3" height="3.3"/><rect x="1571.9" y="1014.6" width="3.3" height="3.3"/>
<rect x="1561.6" y="1019.6" width="3.3" height="3.3"/><rect x="1566.8" y="1019.6" width="3.3" height="3.3"/><rect x="1571.9" y="1019.6" width="3.3" height="3.3"/></g><rect x="1610.8" y="1008.8" width="16.6" height="15.2" rx="0.8" fill="#fff" stroke="#444" stroke-width="1.6"/><rect x="1614.6" y="1011.6" width="8.8" height="9.8" fill="#cfcfcf" stroke="#333" stroke-width="1.3"/>
<g fill="#555"><rect x="1616.4" y="1014" width="5.2" height="1.1"/><rect x="1616.4" y="1016.2" width="5.2" height="1.1"/><rect x="1616.4" y="1018.4" width="5.2" height="1.1"/></g><rect x="1660.8" y="1008.8" width="16.6" height="15.2" rx="0.8" fill="#fff" stroke="#444" stroke-width="1.6"/><path d="M1660.8 1017.4 H1670.6 V1008.8 M1665.8 1008.8 V1017.4" fill="none" stroke="#444" stroke-width="1.4"/><rect x="1700.6" y="1016.2" width="10" height="1.3" fill="#444"/><rect x="1717" y="1016.6" width="125" height="1" fill="#666"/><rect x="1777" y="1010" width="6" height="14" fill="#666"/><path d="M1847.8 1016.8 H1857.8 M1852.8 1011.8 V1021.8" stroke="#444" stroke-width="1.3"/>
</svg>
<div class='t' style='left:61.30px;top:31px;font-size:13px;color:#fff;transform:scaleX(0.9818);'>Автосохранение</div>
<div class='t' style='left:410.57px;top:31px;font-size:15px;color:#fff;transform:scaleX(0.9303);'>База</div>
<div class='t' style='left:790.96px;top:30px;font-size:17px;color:#245c3d;transform:scaleX(1.0435);'>Поиск</div>
<div class='t' style='left:1701.50px;top:31px;font-size:13px;color:#fff;transform:scaleX(0.8579);'>YO</div>
<div class='t' style='left:18.32px;top:81px;font-size:17px;color:#303030;transform:scaleX(0.9750);'>Файл</div>
<div class='t' style='left:83.63px;top:81px;font-size:17px;font-weight:bold;color:#1a1a1a;transform:scaleX(0.9657);'>Главная</div>
<div class='t' style='left:174.65px;top:81px;font-size:17px;color:#303030;transform:scaleX(0.9452);'>Вставка</div>
<div class='t' style='left:265.30px;top:81px;font-size:17px;color:#303030;'>Разметка страницы</div>
<div class='t' style='left:449.00px;top:81px;font-size:17px;color:#303030;'>Формулы</div>
<div class='t' style='left:551.20px;top:81px;font-size:17px;color:#303030;'>Данные</div>
<div class='t' style='left:639.58px;top:81px;font-size:17px;color:#303030;transform:scaleX(1.0154);'>Рецензирование</div>
<div class='t' style='left:799.45px;top:81px;font-size:17px;color:#303030;transform:scaleX(0.9533);'>Вид</div>
<div class='t' style='left:859.30px;top:81px;font-size:17px;color:#303030;transform:scaleX(1.0062);'>Автоматизировать</div>
<div class='t' style='left:1036.01px;top:81px;font-size:17px;color:#303030;transform:scaleX(0.9924);'>Справка</div>
<div class='t' style='left:1625.51px;top:80px;font-size:16px;color:#242424;transform:scaleX(1.0901);'>Примечания</div>
<div class='t' style='left:1770.23px;top:80px;font-size:16px;color:#fff;transform:scaleX(1.0660);'>Общий доступ</div>
<div class='t' style='left:29.31px;top:210px;font-size:13px;color:#2b2b2b;transform:scaleX(0.9851);'>Буфер обмена</div>
<div class='t' style='left:266.51px;top:210px;font-size:13px;color:#2b2b2b;transform:scaleX(0.9881);'>Шрифт</div>
<div class='t' style='left:511.42px;top:210px;font-size:13px;color:#2b2b2b;transform:scaleX(0.9773);'>Выравнивание</div>
<div class='t' style='left:758.82px;top:210px;font-size:13px;color:#2b2b2b;transform:scaleX(0.9778);'>Число</div>
<div class='t' style='left:1040.30px;top:210px;font-size:13px;color:#2b2b2b;transform:scaleX(0.9027);'>Стили</div>
<div class='t' style='left:1275.21px;top:210px;font-size:13px;color:#2b2b2b;transform:scaleX(0.9905);'>Ячейки</div>
<div class='t' style='left:1442.32px;top:210px;font-size:13px;color:#2b2b2b;transform:scaleX(0.9786);'>Редактирование</div>
<div class='t' style='left:1633.21px;top:210px;font-size:13px;color:#2b2b2b;transform:scaleX(0.9871);'>Надстройки</div>
<div class='t' style='left:26.78px;top:161px;font-size:14px;color:#2b2b2b;transform:scaleX(1.0207);'>Вставить</div>
<div class='t' style='left:165.37px;top:128px;font-size:15px;color:#1f1f1f;transform:scaleX(1.0293);'>Calibri</div>
<div class='t' style='left:312.03px;top:128px;font-size:15px;color:#1f1f1f;transform:scaleX(0.9714);'>11</div>
<div class='t' style='left:168.80px;top:166px;font-size:18px;font-weight:bold;color:#333;transform:scaleX(1.1375);'>Ж</div>
<div class='t' style='left:204.00px;top:167px;font-size:16px;font-style:italic;color:#444;transform:scaleX(1.0800);'>К</div>
<div class='t' style='left:234.44px;top:167px;font-size:16px;color:#444;transform:scaleX(1.3556);'>Ч</div>
<div class='t' style='left:700.49px;top:128px;font-size:15px;color:#1f1f1f;transform:scaleX(1.0104);'>Общий</div>
<div class='t' style='left:786.00px;top:167px;font-size:12px;color:#777;transform:scaleX(0.9800);'>000</div>
<div class='t' style='left:933.97px;top:160px;font-size:15px;color:#2b2b2b;transform:scaleX(1.0262);'>Условное</div>
<div class='t' style='left:900.50px;top:180px;font-size:15px;color:#2b2b2b;transform:scaleX(1.0100);'>форматирование</div>
<div class='t' style='left:1042.17px;top:160px;font-size:15px;color:#2b2b2b;transform:scaleX(1.0290);'>Форматировать</div>
<div class='t' style='left:1050.20px;top:180px;font-size:15px;color:#2b2b2b;'>как таблицу</div>
<div class='t' style='left:1166.22px;top:160px;font-size:15px;color:#2b2b2b;transform:scaleX(0.9780);'>Стили</div>
<div class='t' style='left:1161.20px;top:180px;font-size:15px;color:#2b2b2b;transform:scaleX(1.0051);'>ячеек</div>
<div class='t' style='left:1266.74px;top:118px;font-size:15px;color:#2b2b2b;transform:scaleX(0.9613);'>Вставить</div>
<div class='t' style='left:1266.32px;top:150px;font-size:15px;color:#2b2b2b;transform:scaleX(0.9804);'>Удалить</div>
<div class='t' style='left:1266.67px;top:182px;font-size:15px;color:#2b2b2b;transform:scaleX(1.0250);'>Формат</div>
<div class='t' style='left:1432.30px;top:160px;font-size:15px;color:#2b2b2b;'>Сортировка</div>
<div class='t' style='left:1435.71px;top:180px;font-size:15px;color:#2b2b2b;transform:scaleX(0.9935);'>и фильтр</div>
<div class='t' style='left:1534.49px;top:160px;font-size:15px;color:#2b2b2b;transform:scaleX(1.0148);'>Найти и</div>
<div class='t' style='left:1522.72px;top:180px;font-size:15px;color:#2b2b2b;transform:scaleX(0.9788);'>выделить</div>
<div class='t' style='left:1627.29px;top:160px;font-size:15px;color:#2b2b2b;transform:scaleX(1.0086);'>Надстройки</div>
<div class='t' style='left:17.20px;top:248px;font-size:16px;color:#1f1f1f;transform:scaleX(0.9370);'>T27</div>
<div class='t' style='left:229.20px;top:248px;font-size:20px;font-family:"Liberation Serif";font-style:italic;color:#333;transform:scaleX(1.2571);'>fx</div>
<div class='t' style='left:69.50px;top:307px;font-size:15px;color:#1f1f1f;'>A</div>
<div class='t' style='left:264.50px;top:307px;font-size:15px;color:#1f1f1f;'>B</div>
<div class='t' style='left:469.00px;top:307px;font-size:15px;color:#1f1f1f;'>C</div>
<div class='t' style='left:580.50px;top:307px;font-size:15px;color:#1f1f1f;'>D</div>
<div class='t' style='left:682.00px;top:307px;font-size:15px;color:#1f1f1f;'>E</div>
<div class='t' style='left:784.00px;top:307px;font-size:15px;color:#1f1f1f;'>F</div>
<div class='t' style='left:873.50px;top:307px;font-size:15px;color:#1f1f1f;'>G</div>
<div class='t' style='left:935.00px;top:307px;font-size:15px;color:#1f1f1f;'>H</div>
<div class='t' style='left:1010.50px;top:307px;font-size:15px;color:#1f1f1f;'>I</div>
<div class='t' style='left:1091.00px;top:307px;font-size:15px;color:#1f1f1f;'>J</div>
<div class='t' style='left:1171.00px;top:307px;font-size:15px;color:#1f1f1f;'>K</div>
<div class='t' style='left:1254.00px;top:307px;font-size:15px;color:#1f1f1f;'>L</div>
<div class='t' style='left:1334.00px;top:307px;font-size:15px;color:#1f1f1f;'>M</div>
<div class='t' style='left:1417.00px;top:307px;font-size:15px;color:#1f1f1f;'>N</div>
<div class='t' style='left:1498.50px;top:307px;font-size:15px;color:#1f1f1f;'>O</div>
<div class='t' style='left:1581.50px;top:307px;font-size:15px;color:#1f1f1f;'>P</div>
<div class='t' style='left:1662.50px;top:307px;font-size:15px;color:#1f1f1f;'>Q</div>
<div class='t' style='left:1745.00px;top:307px;font-size:15px;color:#1f1f1f;'>R</div>
<div class='t' style='left:1827.00px;top:307px;font-size:15px;color:#1f1f1f;'>S</div>
<div class='t' style='left:12.30px;top:331px;font-size:15px;color:#1f1f1f;'>1</div>
<div class='t' style='left:12.30px;top:355px;font-size:15px;color:#1f1f1f;'>2</div>
<div class='t' style='left:12.30px;top:379px;font-size:15px;color:#1f1f1f;'>3</div>
<div class='t' style='left:12.80px;top:403px;font-size:15px;color:#1f1f1f;'>4</div>
<div class='t' style='left:12.30px;top:427px;font-size:15px;color:#1f1f1f;'>5</div>
<div class='t' style='left:12.30px;top:451px;font-size:15px;color:#1f1f1f;'>6</div>
<div class='t' style='left:12.30px;top:475px;font-size:15px;color:#1f1f1f;'>7</div>
<div class='t' style='left:12.30px;top:499px;font-size:15px;color:#1f1f1f;'>8</div>
<div class='t' style='left:12.30px;top:523px;font-size:15px;color:#1f1f1f;'>9</div>
<div class='t' style='left:8.30px;top:547px;font-size:15px;color:#1f1f1f;'>10</div>
<div class='t' style='left:8.80px;top:571px;font-size:15px;color:#1f1f1f;'>11</div>
<div class='t' style='left:8.30px;top:595px;font-size:15px;color:#1f1f1f;'>12</div>
<div class='t' style='left:8.30px;top:619px;font-size:15px;color:#1f1f1f;'>13</div>
<div class='t' style='left:8.30px;top:643px;font-size:15px;color:#1f1f1f;'>14</div>
<div class='t' style='left:8.30px;top:667px;font-size:15px;color:#1f1f1f;'>15</div>
<div class='t' style='left:8.30px;top:691px;font-size:15px;color:#1f1f1f;'>16</div>
<div class='t' style='left:8.30px;top:715px;font-size:15px;color:#1f1f1f;'>17</div>
<div class='t' style='left:8.30px;top:739px;font-size:15px;color:#1f1f1f;'>18</div>
<div class='t' style='left:8.30px;top:763px;font-size:15px;color:#1f1f1f;'>19</div>
<div class='t' style='left:8.30px;top:787px;font-size:15px;color:#1f1f1f;'>20</div>
<div class='t' style='left:8.30px;top:811px;font-size:15px;color:#1f1f1f;'>21</div>
<div class='t' style='left:8.30px;top:835px;font-size:15px;color:#1f1f1f;'>22</div>
<div class='t' style='left:8.30px;top:859px;font-size:15px;color:#1f1f1f;'>23</div>
<div class='t' style='left:8.30px;top:883px;font-size:15px;color:#1f1f1f;'>24</div>
<div class='t' style='left:8.30px;top:907px;font-size:15px;color:#1f1f1f;'>25</div>
<div class='t' style='left:8.30px;top:931px;font-size:15px;color:#1f1f1f;'>26</div>
<div class='t' style='left:8.30px;top:955px;font-size:15px;color:#107C41;'>27</div>
<div class='t' style='left:37.46px;top:331px;font-size:16px;transform:scaleX(1.0420);'>Вкл/Выкл</div>
<div class='t' style='left:231.45px;top:331px;font-size:16px;transform:scaleX(1.0536);'>Название</div>
<div class='t' style='left:426.96px;top:331px;font-size:16px;transform:scaleX(1.0393);'>Сколько раз</div>
<div class='t' style='left:538.00px;top:331px;font-size:16px;transform:scaleX(1.0549);'>Тип задания</div>
<div class='t' style='left:36.89px;top:355px;font-size:16px;transform:scaleX(1.0080);'>Вкл</div>
<div class='t' style='left:118.18px;top:355px;font-size:16px;transform:scaleX(1.0157);'>Задача_1</div>
<div class='t' style='left:426.37px;top:355px;font-size:15px;transform:scaleX(1.1333);'>20</div>
<div class='t' style='left:528.43px;top:355px;font-size:16px;transform:scaleX(1.0655);'>Продуктивное</div>
<div class='t' style='left:36.89px;top:379px;font-size:16px;transform:scaleX(1.0080);'>Вкл</div>
<div class='t' style='left:118.18px;top:379px;font-size:16px;transform:scaleX(1.0157);'>Задача_2</div>
<div class='t' style='left:426.37px;top:379px;font-size:15px;transform:scaleX(1.1333);'>20</div>
<div class='t' style='left:528.43px;top:379px;font-size:16px;transform:scaleX(1.0655);'>Продуктивное</div>
<div class='t' style='left:36.89px;top:403px;font-size:16px;transform:scaleX(1.0080);'>Вкл</div>
<div class='t' style='left:118.18px;top:403px;font-size:16px;transform:scaleX(1.0157);'>Задача_3</div>
<div class='t' style='left:426.37px;top:403px;font-size:15px;transform:scaleX(1.1333);'>20</div>
<div class='t' style='left:528.43px;top:403px;font-size:16px;transform:scaleX(1.0655);'>Продуктивное</div>
<div class='t' style='left:731.43px;top:331px;font-size:16px;transform:scaleX(1.0680);'>Продуктивное</div>
<div class='t' style='left:731.48px;top:355px;font-size:16px;transform:scaleX(1.0196);'>Пустое</div>
<div class='t' style='left:731.50px;top:379px;font-size:16px;'>Сумма</div>
<div class='t' style='left:870.88px;top:331px;font-size:15px;transform:scaleX(1.1167);'>60</div>
<div class='t' style='left:875.80px;top:355px;font-size:15px;'>0</div>
<div class='t' style='left:870.88px;top:379px;font-size:15px;transform:scaleX(1.1167);'>60</div>
<div class='t' style='left:152.38px;top:986px;font-size:17px;color:#303030;transform:scaleX(1.0159);'>Системный</div>
<div class='t' style='left:277.99px;top:986px;font-size:17px;color:#303030;transform:scaleX(1.0095);'>Ban аккаунты</div>
<div class='t' style='left:418.00px;top:986px;font-size:17px;color:#303030;transform:scaleX(1.0274);'>Аккаунты</div>
<div class='t' style='left:528.93px;top:986px;font-size:17px;color:#303030;transform:scaleX(1.0727);'>Прокси</div>
<div class='t' style='left:622.40px;top:986px;font-size:17px;color:#303030;'>Эмуляция</div>
<div class='t' style='left:826.47px;top:986px;font-size:17px;color:#303030;transform:scaleX(1.0298);'>Подзадачи</div>
<div class='t' style='left:734.00px;top:981px;font-size:17px;font-weight:bold;color:#1a1a1a;'>Задачи</div>
<div style='position:absolute;left:940px;top:964px;width:117px;height:38px;overflow:hidden'><div class='t' style='left:8.00px;top:22px;font-size:17px;color:#303030;'>Синх. таблицы</div></div>
<div class='t' style='left:13.36px;top:1018px;font-size:13px;color:#333;transform:scaleX(1.0410);'>Готово</div>
<div class='t' style='left:75.57px;top:1018px;font-size:13px;color:#333;transform:scaleX(0.9292);'>Вычислить</div>
<div class='t' style='left:185.20px;top:1019px;font-size:13px;font-weight:bold;color:#242424;'>Специальные возможности: проверьте рекомендации</div>
<div class='t' style='left:1873.53px;top:1019px;font-size:13px;color:#333;transform:scaleX(0.9667);'>100 %</div>

<div class='t' style='left:1421.90px;top:916px;font-size:26px;color:rgba(110,110,110,0.40);transform:scaleX(0.9577);'>Активация Windows</div>
<div class='t' style='left:1420.91px;top:946px;font-size:18px;color:rgba(110,110,110,0.40);transform:scaleX(0.9884);'>Чтобы активировать Windows, перейдите в раздел</div>
<div class='t' style='left:1421.00px;top:971px;font-size:18px;color:rgba(110,110,110,0.40);'>"Параметры".</div>
</body></html>
